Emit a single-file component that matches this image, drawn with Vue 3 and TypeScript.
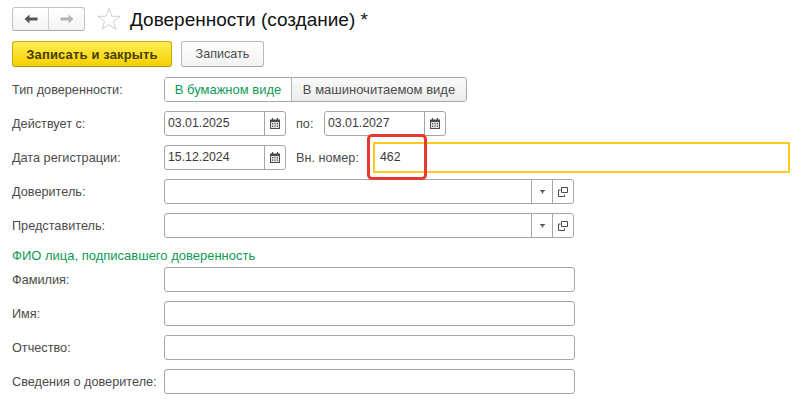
<script setup lang="ts">
interface Row { label: string }
const refRows: Row[] = [{ label: 'Доверитель:' }, { label: 'Представитель:' }]
const nameRows: Row[] = [
  { label: 'Фамилия:' },
  { label: 'Имя:' },
  { label: 'Отчество:' },
  { label: 'Сведения о доверителе:' },
]
</script>

<template>
  <div class="page">
    <header class="head">
      <div class="nav">
        <button class="nav-btn">
          <svg width="14" height="10" viewBox="0 0 14 10"><path d="M0.5 5 L5.5 0.5 V3.5 H13.5 V6.5 H5.5 V9.5 Z" fill="#555" /></svg>
        </button>
        <button class="nav-btn">
          <svg width="14" height="10" viewBox="0 0 14 10"><path d="M13.5 5 L8.5 0.5 V3.5 H0.5 V6.5 H8.5 V9.5 Z" fill="#b5b5b5" /></svg>
        </button>
      </div>
      <svg class="star" width="24" height="24" viewBox="0 0 24 24">
        <path d="M12 1.5 L14.8 9.2 L23 9.4 L16.5 14.4 L18.9 22.3 L12 17.7 L5.1 22.3 L7.5 14.4 L1 9.4 L9.2 9.2 Z" fill="#fff" stroke="#cfcfcf" stroke-width="1" />
      </svg>
      <h1 class="title">Доверенности (создание) *</h1>
    </header>

    <div class="actions">
      <button class="btn primary">Записать и закрыть</button>
      <button class="btn">Записать</button>
    </div>

    <div class="row first">
      <span class="label">Тип доверенности:</span>
      <div class="tabs">
        <span class="tab active">В бумажном виде</span>
        <span class="tab">В машиночитаемом виде</span>
      </div>
    </div>

    <div class="row">
      <span class="label">Действует с:</span>
      <div class="field date">
        <span class="value">03.01.2025</span>
        <span class="cell cal"><svg width="10" height="11" viewBox="0 0 10 11"><path d="M0 1.5 H10 V11 H0 Z" fill="#4a4a4a" /><path d="M2.5 0 V2 M7.5 0 V2" stroke="#4a4a4a" stroke-width="1.2" /><path d="M1 4 H9 V10 H1 Z" fill="#e6e6e6" /><path d="M2 5 H3.2 V6.2 H2 Z M4.4 5 H5.6 V6.2 H4.4 Z M6.8 5 H8 V6.2 H6.8 Z M2 7.6 H3.2 V8.8 H2 Z M4.4 7.6 H5.6 V8.8 H4.4 Z M6.8 7.6 H8 V8.8 H6.8 Z" fill="#4a4a4a" /></svg></span>
      </div>
      <span class="mid-label to">по:</span>
      <div class="field date">
        <span class="value">03.01.2027</span>
        <span class="cell cal"><svg width="10" height="11" viewBox="0 0 10 11"><path d="M0 1.5 H10 V11 H0 Z" fill="#4a4a4a" /><path d="M2.5 0 V2 M7.5 0 V2" stroke="#4a4a4a" stroke-width="1.2" /><path d="M1 4 H9 V10 H1 Z" fill="#e6e6e6" /><path d="M2 5 H3.2 V6.2 H2 Z M4.4 5 H5.6 V6.2 H4.4 Z M6.8 5 H8 V6.2 H6.8 Z M2 7.6 H3.2 V8.8 H2 Z M4.4 7.6 H5.6 V8.8 H4.4 Z M6.8 7.6 H8 V8.8 H6.8 Z" fill="#4a4a4a" /></svg></span>
      </div>
    </div>

    <div class="row">
      <span class="label">Дата регистрации:</span>
      <div class="field date">
        <span class="value">15.12.2024</span>
        <span class="cell cal"><svg width="10" height="11" viewBox="0 0 10 11"><path d="M0 1.5 H10 V11 H0 Z" fill="#4a4a4a" /><path d="M2.5 0 V2 M7.5 0 V2" stroke="#4a4a4a" stroke-width="1.2" /><path d="M1 4 H9 V10 H1 Z" fill="#e6e6e6" /><path d="M2 5 H3.2 V6.2 H2 Z M4.4 5 H5.6 V6.2 H4.4 Z M6.8 5 H8 V6.2 H6.8 Z M2 7.6 H3.2 V8.8 H2 Z M4.4 7.6 H5.6 V8.8 H4.4 Z M6.8 7.6 H8 V8.8 H6.8 Z" fill="#4a4a4a" /></svg></span>
      </div>
      <span class="mid-label num">Вн. номер:</span>
      <div class="focus-field">
        <span class="value">462</span>
        <span class="callout"></span>
      </div>
    </div>

    <div v-for="r in refRows" :key="r.label" class="row">
      <span class="label">{{ r.label }}</span>
      <div class="field ref">
        <span class="value grow"></span>
        <span class="cell drop"><svg width="5" height="4" viewBox="0 0 5 4"><path d="M0 0 H5 V1 H4 L2.5 4 L1 1 H0 Z" fill="#555" /></svg></span>
        <span class="cell open"><svg width="10" height="10" viewBox="0 0 10 10" fill="none" stroke="#4a4a4a" stroke-width="1"><path d="M3.5 0.5 H9.5 V5.5 H3.5 Z" /><path d="M2.5 3 H0.5 V9.5 H6.5 V7.5" /></svg></span>
      </div>
    </div>

    <div class="section">ФИО лица, подписавшего доверенность</div>

    <div v-for="r in nameRows" :key="r.label" class="row">
      <span class="label">{{ r.label }}</span>
      <div class="field wide"></div>
    </div>
  </div>
</template>

<style scoped>
.page {
  width: 798px;
  height: 400px;
  padding: 7px 0 0 12px;
  box-sizing: border-box;
  background: #fff;
  overflow: hidden;
  font-family: "Liberation Sans", Arial, sans-serif;
  font-size: 12.7px;
  color: #4b4b4b;
}
button { font: inherit; padding: 0; }
.head { display: flex; align-items: center; height: 24px; }
.nav {
  display: flex;
  width: 73px;
  height: 24px;
  box-sizing: border-box;
  border: 1px solid #c3c3c3;
  border-bottom-color: #aaa;
  border-radius: 3px;
  background: linear-gradient(#fff, #f4f4f4);
}
.nav-btn {
  flex: 1;
  display: flex;
  align-items: center;
  justify-content: center;
  border: 0;
  background: none;
}
.nav-btn + .nav-btn { border-left: 1px solid #d0d0d0; }
.star { margin-left: 12px; }
.title {
  margin: 1px 0 0 9px;
  font-size: 19px;
  font-weight: 400;
  color: #111;
  line-height: 24px;
  white-space: nowrap;
}
.actions { display: flex; gap: 9px; margin-top: 10px; }
.btn {
  width: 83px;
  height: 26px;
  box-sizing: border-box;
  border: 1px solid #b9b9b9;
  border-bottom-color: #a4a4a4;
  border-radius: 3px;
  background: linear-gradient(#fff, #f2f2f2);
  color: #4b4b4b;
  font-size: 12.6px;
}
.primary {
  width: 160px;
  border-color: #c9a90a;
  border-bottom-color: #b4960a;
  background: linear-gradient(#ffee55, #f5d000);
  color: #4a3d00;
  font-weight: 700;
  font-size: 13px;
  letter-spacing: 0.15px;
}
.row { display: flex; align-items: center; height: 25px; margin-top: 9px; }
.row.first { margin-top: 10px; }
.label { width: 152px; flex: none; white-space: nowrap; }
.tabs {
  display: flex;
  width: 303px;
  height: 25px;
  box-sizing: border-box;
  border: 1px solid #a8a8a8;
  border-radius: 3px;
  overflow: hidden;
  font-size: 13px;
}
.tab {
  flex: 1;
  display: flex;
  align-items: center;
  justify-content: center;
  background: linear-gradient(#fafafa, #ececec);
  border-left: 1px solid #b4b4b4;
  white-space: nowrap;
}
.tab.active {
  flex: none;
  width: 126px;
  background: #fff;
  border-left: 0;
  color: #0f9a55;
}
.field {
  display: flex;
  align-items: stretch;
  height: 25px;
  box-sizing: border-box;
  border: 1px solid #a6a6a6;
  border-radius: 3px;
  background: #fff;
}
.date { width: 122px; }
.ref { width: 410px; }
.wide { width: 411px; }
.value {
  flex: 1;
  padding-left: 3px;
  line-height: 23px;
  color: #3a3a3a;
  font-size: 12.3px;
}
.cell {
  display: flex;
  align-items: center;
  justify-content: center;
  flex: none;
  border-left: 1px solid #a6a6a6;
}
.cal { width: 20px; }
.drop, .open { width: 20px; }
.mid-label { flex: none; white-space: nowrap; }
.to { width: 28px; margin-left: 10px; }
.num { width: 77px; margin-left: 10px; }
.focus-field {
  position: relative;
  width: 417px;
  height: 31px;
  margin: -3px 0;
  flex: none;
  display: flex;
  box-sizing: border-box;
  border: 2px solid #fbca1f;
}
.focus-field .value { line-height: 27px; padding-left: 5px; }
.callout {
  position: absolute;
  left: -8px;
  top: -10px;
  width: 60px;
  height: 46px;
  box-sizing: border-box;
  border: 3px solid #e53a2f;
  border-radius: 5px;
}
.section {
  margin-top: 9px;
  height: 17px;
  line-height: 17px;
  font-size: 13px;
  color: #0f9a55;
}
.section + .row { margin-top: 3px; }
</style>
